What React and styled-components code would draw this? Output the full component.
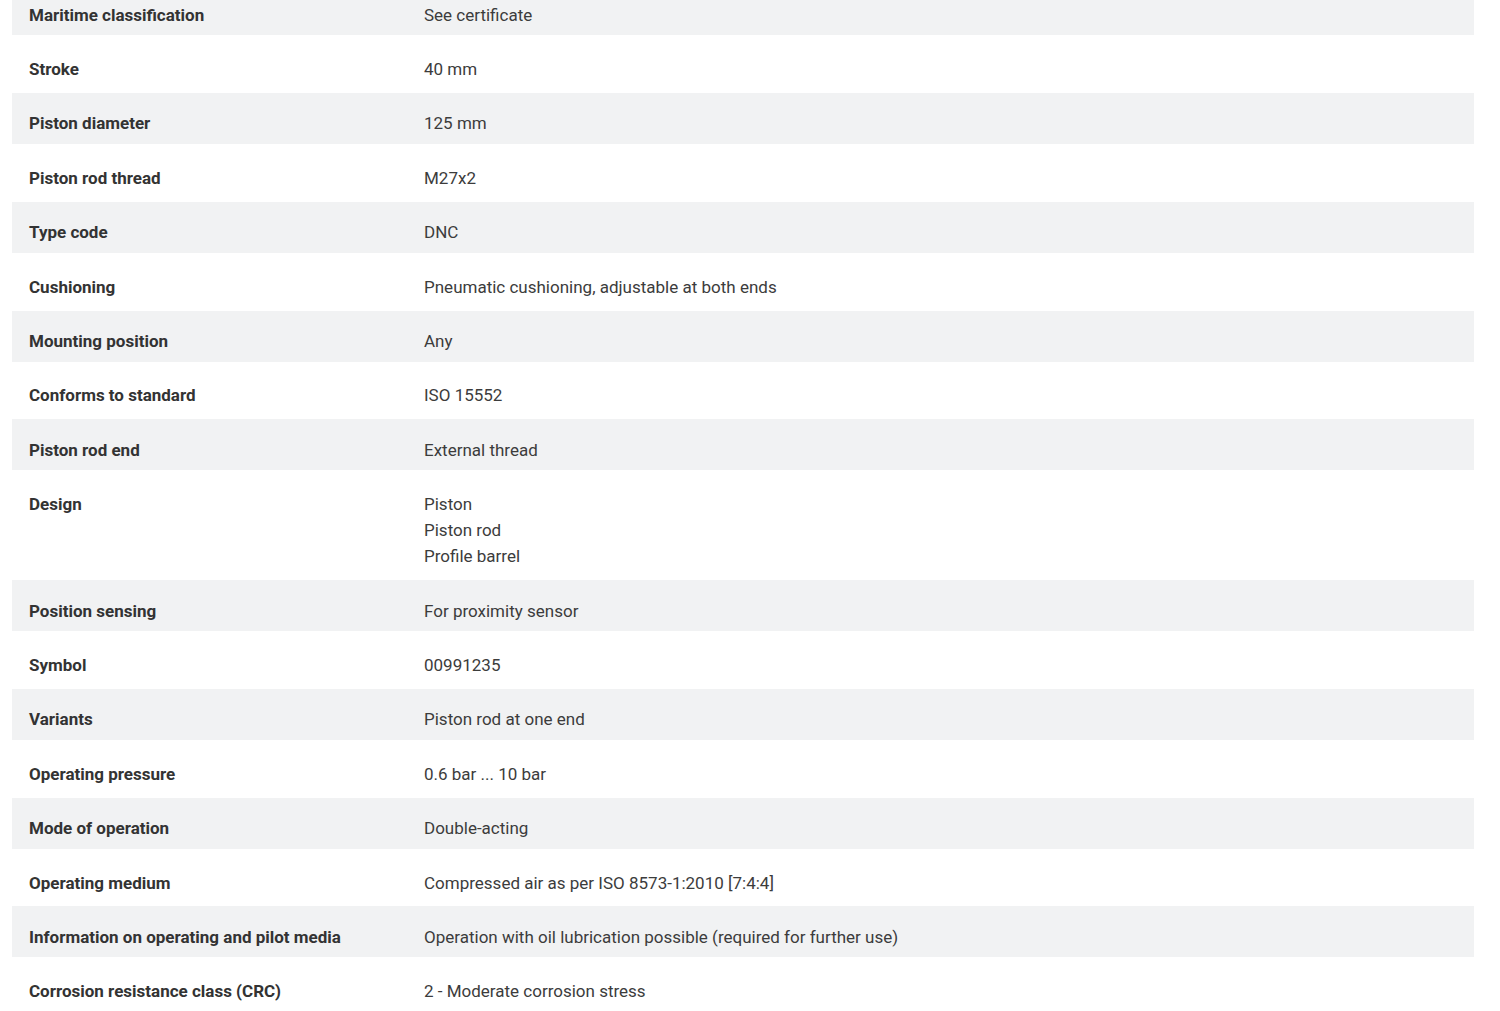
import React from "react";
import styled, { createGlobalStyle } from "styled-components";

const GlobalStyle = createGlobalStyle`
    body {
        margin: 0;
        background: #fff;
        font-family: Roboto, "Liberation Sans", sans-serif;
        overflow: hidden;
    }
`;

const Table = styled.div`
    width: 1462px;
    margin: -17.8px 0 0 12px;
`;

const Row = styled.div`
    padding: 2px 0 1.4px;
`;

const Cells = styled.div`
    display: grid;
    grid-template-columns: 395px 1fr;
    background: ${(props) => (props.$shaded ? "#f1f2f3" : "transparent")};
    padding: 17.5px 0 7.5px;
    font-size: 17px;
    line-height: 26px;
`;

const Label = styled.div`
    padding-left: 17px;
    font-weight: 700;
    color: #333;
`;

const Value = styled.div`
    padding-left: 17px;
    color: #3c3c3c;
`;

const rows = [
    ["Maritime classification", ["See certificate"]],
    ["Stroke", ["40 mm"]],
    ["Piston diameter", ["125 mm"]],
    ["Piston rod thread", ["M27x2"]],
    ["Type code", ["DNC"]],
    ["Cushioning", ["Pneumatic cushioning, adjustable at both ends"]],
    ["Mounting position", ["Any"]],
    ["Conforms to standard", ["ISO 15552"]],
    ["Piston rod end", ["External thread"]],
    ["Design", ["Piston", "Piston rod", "Profile barrel"]],
    ["Position sensing", ["For proximity sensor"]],
    ["Symbol", ["00991235"]],
    ["Variants", ["Piston rod at one end"]],
    ["Operating pressure", ["0.6 bar ... 10 bar"]],
    ["Mode of operation", ["Double-acting"]],
    ["Operating medium", ["Compressed air as per ISO 8573-1:2010 [7:4:4]"]],
    ["Information on operating and pilot media", ["Operation with oil lubrication possible (required for further use)"]],
    ["Corrosion resistance class (CRC)", ["2 - Moderate corrosion stress"]],
];

const App = () => {
    return (
        <>
            <GlobalStyle />
            <Table>
                {rows.map(([label, values], i) => (
                    <Row key={label}>
                        <Cells $shaded={i % 2 === 0}>
                            <Label>{label}</Label>
                            <Value>
                                {values.map((v) => (
                                    <div key={v}>{v}</div>
                                ))}
                            </Value>
                        </Cells>
                    </Row>
                ))}
            </Table>
        </>
    );
};

export default App;
